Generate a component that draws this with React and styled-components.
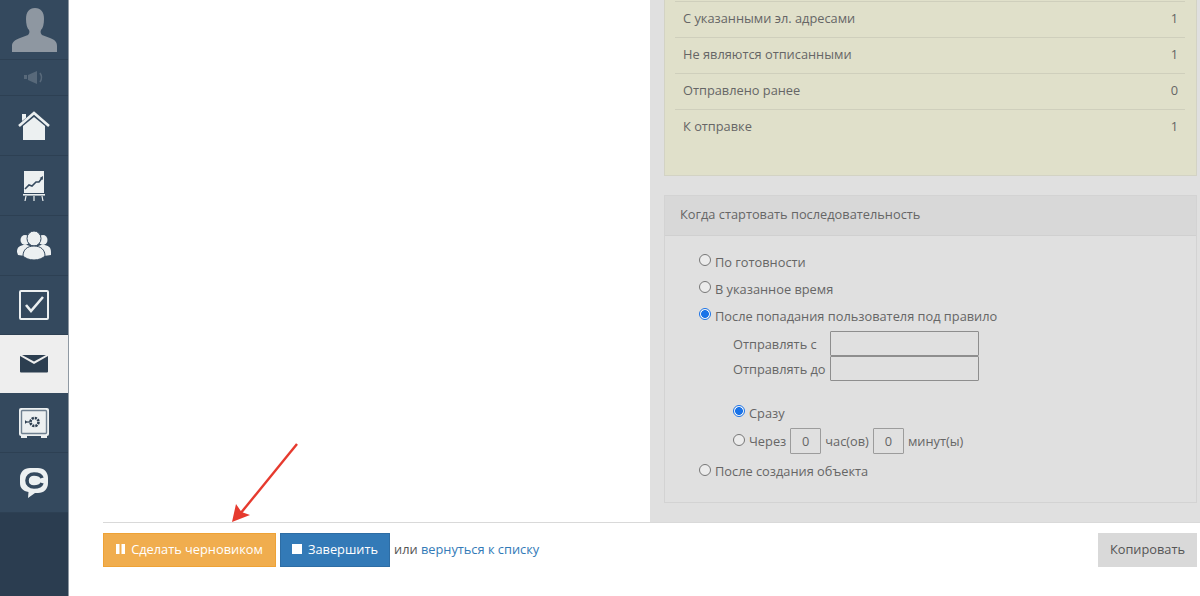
import React from "react";
import styled, { createGlobalStyle } from "styled-components";

const Global = createGlobalStyle`
  html, body { margin: 0; padding: 0; background: #fff; overflow: hidden; }
  body { font-family: "Open Sans", "Noto Sans", "Liberation Sans", sans-serif; }
`;
const Page = styled.div`
  position: relative;
  display: flex;
  width: 1200px;
  height: 596px;
  overflow: hidden;
  color: #666;
  font-size: 12.8px;
`;
const Sidebar = styled.nav`
  width: 68px;
  height: 596px;
  flex: none;
  background: #2b3d50;
  border-right: 1px solid #8f99a3;
  display: flex;
  flex-direction: column;
`;
const NavItem = styled.div`
  height: ${p => p.$h}px;
  flex: none;
  box-sizing: border-box;
  display: flex;
  align-items: center;
  justify-content: center;
  background: ${p => (p.$active ? "#eeeeee" : "#34495e")};
  border-bottom: 1px solid ${p => (p.$active ? "#eeeeee" : "#2d4053")};
`;
const Main = styled.div`
  flex: 1;
  min-width: 0;
  display: flex;
  flex-direction: column;
`;
const Content = styled.div`
  height: 522px;
  flex: none;
  display: flex;
  justify-content: flex-end;
`;
const RightPanel = styled.aside`
  width: 550px;
  box-sizing: border-box;
  background: #e0e0e0;
  padding: 0 3px 0 14px;
  display: flex;
  flex-direction: column;
  gap: 19px;
`;
const StatCard = styled.section`
  height: 176px;
  box-sizing: border-box;
  background: #e0e0ca;
  border: 1px solid #d3d3c4;
  border-top: none;
  padding: 1px 11px 0 10px;
`;
const StatRow = styled.div`
  height: 36px;
  box-sizing: border-box;
  border-top: 1px solid #cfcfbc;
  display: flex;
  align-items: center;
  justify-content: space-between;
  padding: 0 7px 3px 8px;
`;
const SettingsCard = styled.section`
  height: 308px;
  box-sizing: border-box;
  border: 1px solid #d3d3d3;
`;
const CardHead = styled.header`
  height: 40px;
  box-sizing: border-box;
  background: #d8d8d8;
  border-bottom: 1px solid #d0d0d0;
  display: flex;
  align-items: center;
  padding: 0 0 3px 15px;
`;
const CardBody = styled.div`
  padding: 12px 0 0 34px;
  display: flex;
  flex-direction: column;
`;
const RadioRow = styled.label`
  height: ${p => p.$h || 27}px;
  display: flex;
  align-items: center;
  gap: 4px;
  margin-left: ${p => p.$indent || 0}px;
`;
const Radio = styled.span`
  width: 10px;
  height: 10px;
  flex: none;
  border-radius: 50%;
  border: 1px solid #777;
  background: #ececec;
  margin-top: -3px;
  ${p => p.$on && `
    border: 1px solid #1a73e8;
    background: radial-gradient(circle, #1a73e8 0 3.6px, #f5f5f5 4.2px);
  `}
`;
const FieldRow = styled.div`
  height: 25px;
  display: flex;
  align-items: center;
  margin-left: 34px;
`;
const FieldLabel = styled.span`
  width: 97px;
  flex: none;
  white-space: nowrap;
`;
const TextBox = styled.div`
  width: 149px;
  height: 25px;
  box-sizing: border-box;
  border: 1px solid #8e8e8e;
  border-radius: 1px;
`;
const Gap = styled.div`
  height: ${p => p.$h}px;
`;
const NumBox = styled.div`
  width: 31px;
  height: 26px;
  box-sizing: border-box;
  border: 1px solid #9c9c9c;
  border-radius: 1px;
  display: flex;
  align-items: center;
  justify-content: center;
`;
const Footer = styled.footer`
  flex: 1;
  margin-left: 34px;
  border-top: 1px solid #d9d9d9;
  padding: 10px 3px 0 0;
  display: flex;
  align-items: flex-start;
`;
const Btn = styled.button`
  width: ${p => p.$w}px;
  height: 34px;
  box-sizing: border-box;
  padding: 0 0 2px;
  margin-right: ${p => p.$mr || 0}px;
  border: 1px solid ${p => p.$border};
  background: ${p => p.$bg};
  color: ${p => p.$color};
  font: inherit;
  display: flex;
  align-items: center;
  justify-content: center;
  gap: 6px;
`;
const Note = styled.span`
  line-height: 32px;
  margin-left: 4px;
  color: #555;
`;
const Link = styled.a`
  color: #337ab7;
`;
const Spacer = styled.div`
  flex: 1;
`;
const Arrow = styled.svg`
  position: absolute;
  left: 225px;
  top: 440px;
`;
const Dim = styled.svg`
  opacity: ${p => p.$o || 1};
`;

const c = "#ecf0f1";
const d = "#34495e";

const Avatar = () => (
  <svg width="45" height="44" viewBox="0 0 45 44">
    <path fill="#8e97a1" d="M0 44v-6c0-4 3-6 8-8l8-3c1-1 2-3 1-5-2-2-3-6-3-11C14 4 17 0 23 0s9 4 9 11c0 5-1 9-3 11-1 2 0 4 1 5l8 3c5 2 7 4 7 8v6z" />
  </svg>
);
const Speaker = () => (
  <Dim $o=".4" width="20" height="13" viewBox="0 0 20 13">
    <path fill="#8e9aa6" d="M0 4h3v4H0zM4 4l9-4v13L4 9z" />
    <path fill="none" stroke="#8e9aa6" strokeWidth="1.6" d="M16 2c2 3 2 6 0 9" />
  </Dim>
);
const Home = () => (
  <svg width="32" height="30" viewBox="0 0 32 30">
    <path fill={c} d="M4 3h4v4L4 10z" />
    <path fill="none" stroke={c} strokeWidth="2.6" d="M1 15 16 2l15 13" />
    <path fill={c} d="M5 15 16 6l11 9v14H5z" />
  </svg>
);
const Chart = () => (
  <svg width="22" height="30" viewBox="0 0 22 30">
    <path fill={c} d="M1 0h20v22H1z" />
    <path fill={c} d="M0 23h22v1.6H0z" />
    <path stroke={c} strokeWidth="1.2" d="M3 25l-1 5M11 25v5M19 25l1 5" />
    <path fill="none" stroke={d} strokeWidth="1.6" d="M2 18l4-4 3 1 4-4 3 0 3-4" />
    <path fill={d} d="M20 5l-.3 4-3-2z" />
  </svg>
);
const People = () => (
  <svg width="34" height="29" viewBox="0 0 34 29">
    <ellipse cx="8" cy="9" rx="4.5" ry="5" fill={c} />
    <ellipse cx="26" cy="9" rx="4.5" ry="5" fill={c} />
    <path fill={c} d="M0 21c0-5 3-7 8-7s8 2 8 7v4l-8 0-7-1zM18 21c0-5 3-7 8-7s8 2 8 7v3l-7 1-9 0z" />
    <ellipse cx="17" cy="7.5" rx="7" ry="7.5" fill={c} stroke={d} strokeWidth="1" />
    <path fill={c} stroke={d} strokeWidth="1" d="M6 25c0-6 4-10 11-10s11 4 11 10c-2 2-6 4-11 4s-9-2-11-4z" />
  </svg>
);
const Check = () => (
  <svg width="30" height="30" viewBox="0 0 30 30">
    <rect x="1" y="1" width="28" height="28" rx="1" fill="none" stroke={c} strokeWidth="2" />
    <path fill="none" stroke={c} strokeWidth="2.6" d="M7 15l5 6L24 7" />
  </svg>
);
const Mail = () => (
  <svg width="30" height="18" viewBox="0 0 30 18">
    <path fill="#2c3e50" d="M1 1l14 8L29 1v15.500a1 1 0 0 1-1 1H2a1 1 0 0 1-1-1z" />
    <path fill="#2c3e50" d="M3 0h24L15 6.500z" />
  </svg>
);
const Safe = () => (
  <svg width="30" height="30" viewBox="0 0 30 30">
    <rect x="0" y="0" width="30" height="28" rx="2" fill={c} />
    <rect x="2.500" y="2.500" width="25" height="23" rx="1" fill={c} stroke="#6f8090" strokeWidth="1.400" />
    <path fill={c} d="M2 28h6v2H2zM22 28h6v2h-6z" />
    <circle cx="15.500" cy="14" r="4" fill="none" stroke="#2c3e50" strokeWidth="2.600" strokeDasharray="2.200 .9" />
    <path stroke="#2c3e50" strokeWidth="1.200" d="M7 14h4" />
    <path fill="#2c3e50" d="M6 12v4l2-2z" />
  </svg>
);
const Chat = () => (
  <svg width="28" height="30" viewBox="0 0 28 30">
    <path fill={c} d="M10 0h8c6 0 10 4 10 10v5c0 6-4 10-10 10h-3l-7 5 .5-6C3 23 0 20 0 15v-5C0 4 4 0 10 0z" />
    <path fill="none" stroke={d} strokeWidth="3.600" d="M22 10c-1-3-4-4-8-4-4 0-7 2.500-7 6.500S10 19 14 19c4 0 7-1 8-4" />
  </svg>
);

const stats = [
  ["С указанными эл. адресами", 1],
  ["Не являются отписанными", 1],
  ["Отправлено ранее", 0],
  ["К отправке", 1],
];

export default function App() {
  return (
    <Page>
      <Global />
      <Sidebar>
        <NavItem $h={60}><Avatar /></NavItem>
        <NavItem $h={36}><Speaker /></NavItem>
        <NavItem $h={60}><Home /></NavItem>
        <NavItem $h={60}><Chart /></NavItem>
        <NavItem $h={60}><People /></NavItem>
        <NavItem $h={59}><Check /></NavItem>
        <NavItem $h={58} $active><Mail /></NavItem>
        <NavItem $h={60}><Safe /></NavItem>
        <NavItem $h={60}><Chat /></NavItem>
      </Sidebar>
      <Main>
        <Content>
          <RightPanel>
            <StatCard>
              {stats.map(([label, value]) => (
                <StatRow key={label}>
                  <span>{label}</span>
                  <span>{value}</span>
                </StatRow>
              ))}
            </StatCard>
            <SettingsCard>
              <CardHead>Когда стартовать последовательность</CardHead>
              <CardBody>
                <RadioRow><Radio />По готовности</RadioRow>
                <RadioRow><Radio />В указанное время</RadioRow>
                <RadioRow><Radio $on />После попадания пользователя под правило</RadioRow>
                <Gap $h={2} />
                <FieldRow><FieldLabel>Отправлять с</FieldLabel><TextBox /></FieldRow>
                <FieldRow><FieldLabel>Отправлять до</FieldLabel><TextBox /></FieldRow>
                <Gap $h={18} />
                <RadioRow $indent={34}><Radio $on />Сразу</RadioRow>
                <RadioRow $indent={34} $h={30}>
                  <Radio />Через<NumBox>0</NumBox>час(ов)<NumBox>0</NumBox>минут(ы)
                </RadioRow>
                <RadioRow $h={30}><Radio />После создания объекта</RadioRow>
              </CardBody>
            </SettingsCard>
          </RightPanel>
        </Content>
        <Footer>
          <Btn $w={173} $mr={4} $bg="#f0ad4e" $border="#eea236" $color="#fff">
            <svg width="9" height="10" viewBox="0 0 9 10"><path fill="#fff" d="M0 0h3.500v10H0zM5.500 0H9v10H5.500z" /></svg>
            Сделать черновиком
          </Btn>
          <Btn $w={110} $bg="#337ab7" $border="#2e6da4" $color="#fff">
            <svg width="10" height="10" viewBox="0 0 10 10"><path fill="#fff" d="M0 0h10v10H0z" /></svg>
            Завершить
          </Btn>
          <Note>или <Link>вернуться к списку</Link></Note>
          <Spacer />
          <Btn $w={99} $bg="#d9d9d9" $border="#d9d9d9" $color="#555">Копировать</Btn>
        </Footer>
      </Main>
      <Arrow width="80" height="90" viewBox="225 440 80 90">
        <path stroke="#e63a2e" strokeWidth="2.400" d="M297 444 240 514" />
        <path fill="#e63a2e" d="M232 522l4-18 5.500 8 8.500 3z" />
      </Arrow>
    </Page>
  );
}
